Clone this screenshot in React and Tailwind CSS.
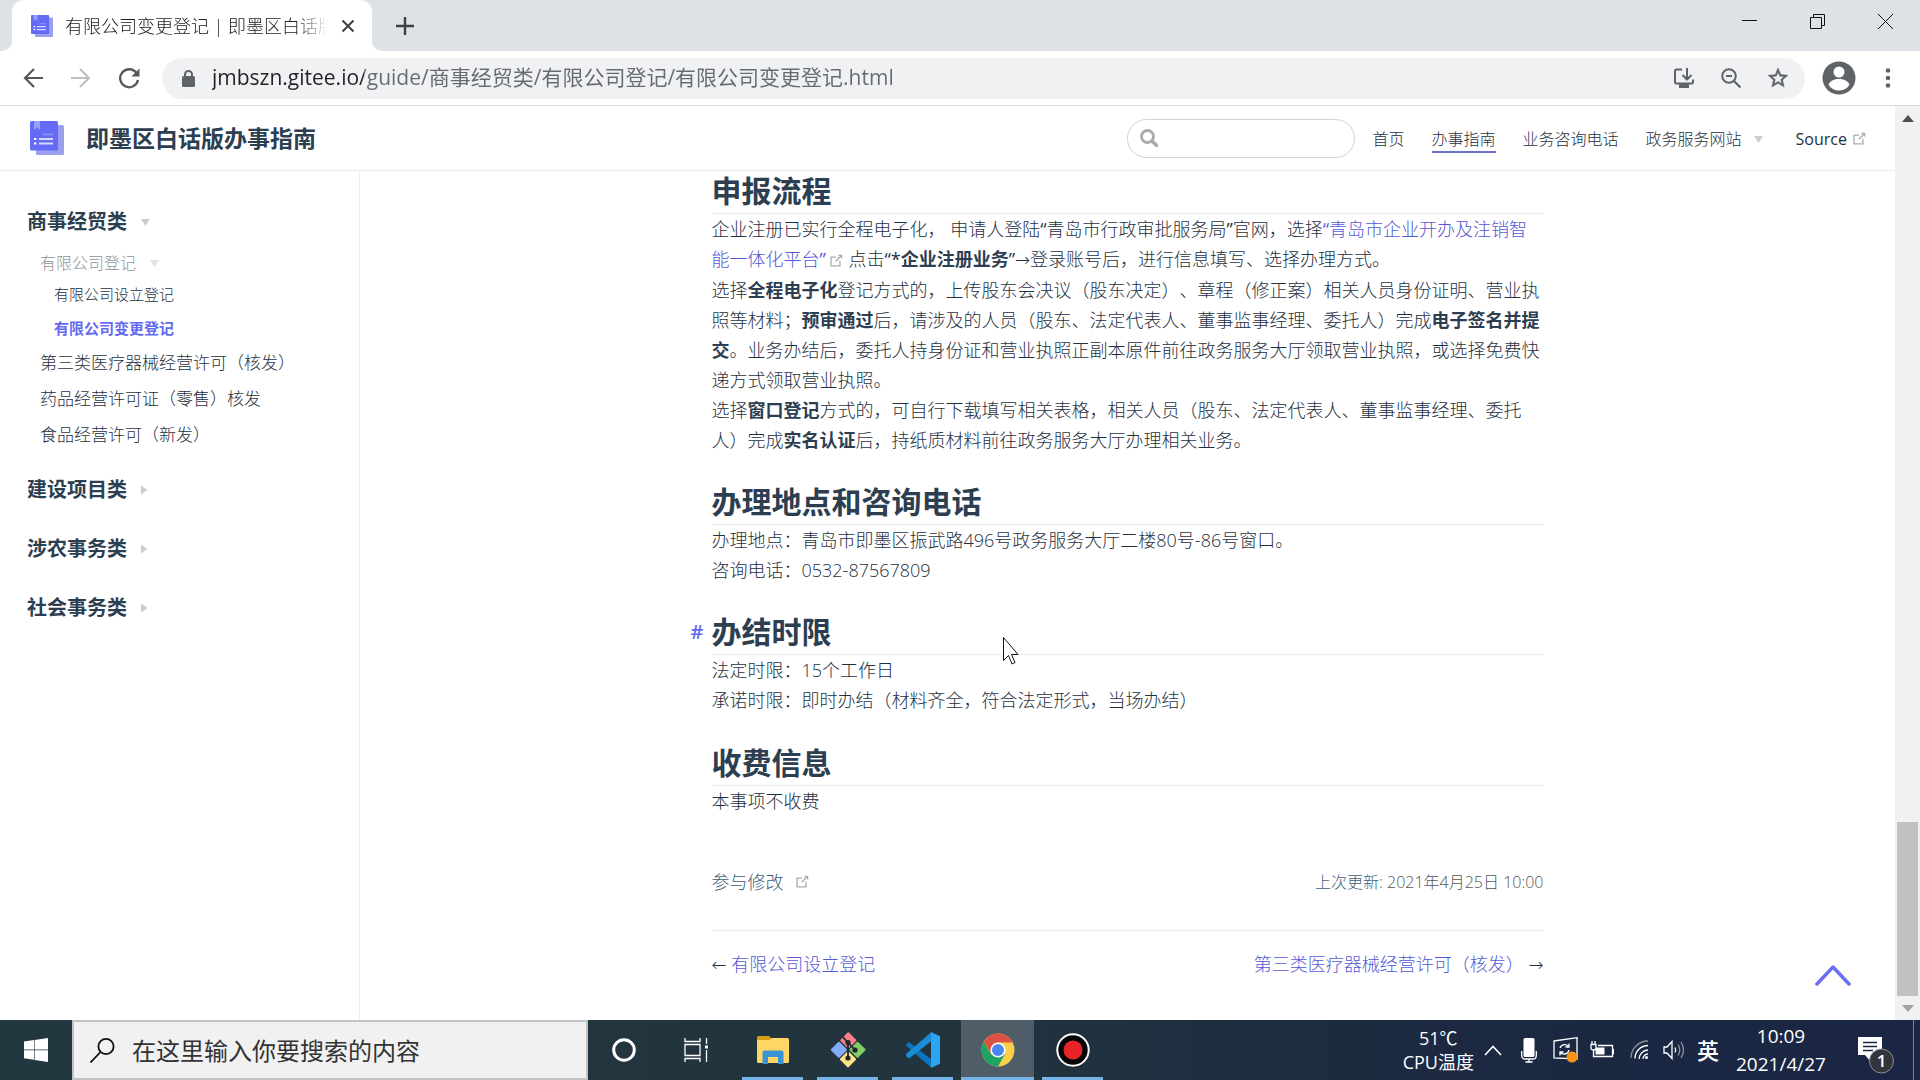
import React from "react";

const sans = "font-['Open_Sans','Noto_Sans_CJK_SC',sans-serif]";

function BookLogo({ className }) {
  return (
    <svg viewBox="0 0 34 34" className={className} aria-hidden="true">
      <rect x="6" y="4" width="28" height="30" rx="1.5" fill="#9aa0ee" />
      <rect x="0" y="0" width="28" height="29.5" rx="1.5" fill="#656bf6" />
      <path d="M4 0h6v9l-3-3-3 3z" fill="#9ba0f8" />
      <path d="M13 13.5h10" stroke="#8f95f9" strokeWidth="1.6" />
      <path d="M9 18h14M9 22.5h14" stroke="#d7d9ff" strokeWidth="1.8" />
      <path d="M4 18h2.4M4 22.5h2.4" stroke="#fff" strokeWidth="2.2" />
    </svg>
  );
}

function Outbound({ className = "" }) {
  return (
    <svg viewBox="0 0 100 100" className={"inline-block h-4 w-4 align-middle " + className} fill="#aaa" aria-hidden="true">
      <path d="M18.8,85.1h56c2.2,0,4-1.8,4-4v-32h-8v28h-48v-48h28v-8h-32c-2.2,0-4,1.8-4,4v56C14.8,83.3,16.6,85.1,18.8,85.1z" />
      <path d="M45.7,48.7l5.6,5.6L81,24.6v10h8V15c0-2.200-1.800-4-4-4H65v8h10.400z" />
    </svg>
  );
}

function Down({ className = "text-[#ccc]" }) {
  return (
    <svg viewBox="0 0 10 8" className={"h-2 w-2.5 " + className} fill="currentColor" aria-hidden="true">
      <path d="M0 1h9L4.500 8z" />
    </svg>
  );
}

function Right() {
  return (
    <svg viewBox="0 0 8 10" className="h-2.5 w-2 text-[#ccc]" fill="currentColor" aria-hidden="true">
      <path d="M0 0.500v9L6.500 5z" />
    </svg>
  );
}

function TabStrip() {
  return (
    <div className="flex h-[51px] items-stretch bg-[#dee1e6] pl-3">
      <div className="relative flex w-[360px] items-center rounded-t-xl bg-white pl-[19px] pr-3">
        <svg viewBox="0 0 10 10" className="absolute -left-2.5 bottom-0 h-2.5 w-2.5" aria-hidden="true">
          <path d="M10 0v10H0A10 10 0 0 0 10 0z" fill="#fff" />
        </svg>
        <svg viewBox="0 0 10 10" className="absolute -right-2.5 bottom-0 h-2.5 w-2.5" aria-hidden="true">
          <path d="M0 0v10h10A10 10 0 0 1 0 0z" fill="#fff" />
        </svg>
        <BookLogo className="h-[22px] w-[22px] shrink-0" />
        <span className="ml-3 flex-1 overflow-hidden whitespace-nowrap text-lg font-light text-[#202124] [mask-image:linear-gradient(to_right,#000_88%,transparent)]">
          有限公司变更登记 | 即墨区白话版办事指南
        </span>
        <button aria-label="关闭标签页" className="ml-2 grid h-6 w-6 place-items-center">
          <svg viewBox="0 0 14 14" className="h-3.5 w-3.5" stroke="#3c4043" strokeWidth="2" aria-hidden="true">
            <path d="M1.500 1.500l11 11M12.500 1.500l-11 11" />
          </svg>
        </button>
      </div>
      <button aria-label="新标签页" className="ml-[21px] grid w-6 place-items-center">
        <svg viewBox="0 0 18 18" className="h-[18px] w-[18px]" stroke="#3c4043" strokeWidth="2.400" aria-hidden="true">
          <path d="M9 0v18M0 9h18" />
        </svg>
      </button>
      <div className="ml-auto flex h-[43px] items-center">
        <button aria-label="最小化" className="grid h-full w-[68px] place-items-center">
          <svg viewBox="0 0 15 15" className="h-[15px] w-[15px]" stroke="#111" aria-hidden="true">
            <path d="M0 6.500h15" />
          </svg>
        </button>
        <button aria-label="还原" className="grid h-full w-[68px] place-items-center">
          <svg viewBox="0 0 15 15" className="h-[15px] w-[15px]" fill="none" stroke="#111" aria-hidden="true">
            <path d="M0.500 3.500h11v11h-11zM3.500 3.500v-3h11v11h-3" />
          </svg>
        </button>
        <button aria-label="关闭" className="grid h-full w-[69px] place-items-center">
          <svg viewBox="0 0 15 15" className="h-[15px] w-[15px]" stroke="#111" aria-hidden="true">
            <path d="M0 0l15 15M15 0L0 15" />
          </svg>
        </button>
      </div>
    </div>
  );
}

function Toolbar() {
  return (
    <div className="flex h-[55px] items-center border-b border-[#d9dbde] bg-white pl-[21px] pr-5">
      <button aria-label="后退" className="grid h-6 w-6 place-items-center">
        <svg viewBox="0 0 20 20" className="h-5 w-5" fill="none" stroke="#55585c" strokeWidth="2.200" aria-hidden="true">
          <path d="M20 10H2M11 1l-9 9 9 9" />
        </svg>
      </button>
      <button aria-label="前进" className="ml-6 grid h-6 w-6 place-items-center">
        <svg viewBox="0 0 20 20" className="h-5 w-5" fill="none" stroke="#bdc1c6" strokeWidth="2.200" aria-hidden="true">
          <path d="M0 10h18M9 1l9 9-9 9" />
        </svg>
      </button>
      <button aria-label="重新加载" className="ml-6 grid h-6 w-6 place-items-center">
        <svg viewBox="0 0 22 22" className="h-[22px] w-[22px]" aria-hidden="true">
          <path d="M18.500 6A9 9 0 1 0 20 13" fill="none" stroke="#55585c" strokeWidth="2.300" />
          <path d="M21.500 1.500v8h-8z" fill="#55585c" />
        </svg>
      </button>
      <div className="ml-[21px] flex h-[41px] min-w-0 flex-1 items-center rounded-full bg-[#f0f1f3] pl-5 pr-[15px]">
        <svg viewBox="0 0 13 17" className="h-[17px] w-[13px] shrink-0" aria-hidden="true">
          <path d="M3 8V4.500a3.500 3.500 0 0 1 7 0V8" fill="none" stroke="#5f6368" strokeWidth="2" />
          <rect y="6" width="13" height="11" rx="1.500" fill="#5f6368" />
        </svg>
        <input
          aria-label="地址栏"
          defaultValue="jmbszn.gitee.io/guide/商事经贸类/有限公司登记/有限公司变更登记.html"
          className="ml-[17px] min-w-0 flex-1 bg-[linear-gradient(to_right,#202124_152px,#666a6f_152px)] bg-clip-text text-[21px] text-transparent outline-none"
        />
        <div className="flex items-center gap-[23px]">
          <button aria-label="安装应用" className="grid h-6 w-6 place-items-center">
            <svg viewBox="0 0 20 20" className="h-5 w-5" fill="none" stroke="#5f6368" strokeWidth="2" aria-hidden="true">
              <path d="M8 1.500H2.500Q1 1.500 1 3v11q0 1.500 1.500 1.500h15Q19 15.500 19 14v-2.500M13 0v11M8.500 7l4.500 4.500L17.500 7" />
              <path d="M5 16h10v4H5z" fill="#5f6368" stroke="none" />
            </svg>
          </button>
          <button aria-label="缩放" className="grid h-6 w-6 place-items-center">
            <svg viewBox="0 0 20 20" className="h-5 w-5" fill="none" stroke="#5f6368" strokeWidth="2" aria-hidden="true">
              <circle cx="8" cy="8" r="6.800" />
              <path d="M13 13l6.500 6.500M5 8h6" strokeWidth="2.200" />
            </svg>
          </button>
          <button aria-label="为此标签页添加书签" className="grid h-6 w-6 place-items-center">
            <svg viewBox="0 0 24 24" className="h-6 w-6" fill="#5f6368" stroke="#5f6368" strokeWidth="0.500" aria-hidden="true">
              <path d="M22 9.240l-7.190-.62L12 2 9.190 8.630 2 9.240l5.460 4.730L5.820 21 12 17.270 18.180 21l-1.630-7.030L22 9.240zM12 15.400l-3.760 2.270 1-4.280-3.320-2.880 4.380-.38L12 6.100l1.710 4.040 4.380.38-3.320 2.880 1 4.280L12 15.400z" />
            </svg>
          </button>
        </div>
      </div>
      <button aria-label="个人资料" className="ml-[17px]">
        <svg viewBox="0 0 34 34" className="h-[34px] w-[34px]" aria-hidden="true">
          <circle cx="17" cy="17" r="16.500" fill="#5f6368" />
          <circle cx="17" cy="11" r="5.500" fill="#fff" />
          <path d="M6.500 23.500c2-4 6-5.500 10.500-5.500s8.500 1.500 10.500 5.500c-2.200 4-6 6-10.500 6s-8.300-2-10.500-6z" fill="#fff" />
        </svg>
      </button>
      <button aria-label="更多" className="ml-5 grid h-8 w-6 place-items-center">
        <svg viewBox="0 0 6 20" className="h-5 w-1.5" fill="#5f6368" aria-hidden="true">
          <circle cx="3" cy="2.500" r="2.300" />
          <circle cx="3" cy="10" r="2.300" />
          <circle cx="3" cy="17.500" r="2.300" />
        </svg>
      </button>
    </div>
  );
}

function SiteHeader() {
  return (
    <header className="flex h-[65px] items-center border-b border-[#eaecef] bg-white pl-[30px] pr-7 text-[#2c3e50]">
      <a href="#home" className="flex items-center">
        <BookLogo className="h-[34px] w-[34px]" />
        <span className="ml-[22px] text-[23px] font-semibold">即墨区白话版办事指南</span>
      </a>
      <label className="ml-auto flex h-[39px] w-[228px] items-center rounded-full border border-[#cfd4db] pl-3 pr-4">
        <svg viewBox="0 0 18 18" className="h-[18px] w-[18px] shrink-0" fill="none" stroke="#aaa" aria-hidden="true">
          <circle cx="7.500" cy="7.500" r="6" strokeWidth="2.800" />
          <path d="M12 12l5 5" strokeWidth="3.400" strokeLinecap="round" />
        </svg>
        <input type="text" aria-label="搜索" className="ml-2 w-full min-w-0 bg-transparent outline-none" />
      </label>
      <nav className="ml-[18px] flex items-center gap-[27px] pt-0.5 text-base font-light leading-6 text-[#1f3141]">
        <a href="#home">首页</a>
        <a href="#guide" className="-mb-0.5 border-b-2 border-[#6d72cf]">办事指南</a>
        <a href="#tel">业务咨询电话</a>
        <button className="flex items-center">
          政务服务网站 <Down className="ml-3 text-[#ccc]" />
        </button>
        <a href="#source" className="ml-[5px] flex items-center font-medium">
          Source <Outbound className="ml-1" />
        </a>
      </nav>
    </header>
  );
}

function Group({ title, open }) {
  return (
    <button className="flex h-[59px] w-full items-center gap-3.5 pl-[27px] text-xl font-bold">
      {title}
      {open ? <Down /> : <Right />}
    </button>
  );
}

function Sidebar() {
  return (
    <aside className="w-[360px] shrink-0 border-r border-[#eaecef] pt-[21px] text-[#2c3e50]">
      <Group title="商事经贸类" open />
      <div className="flex flex-col font-light text-[#1f3141]">
        <button className="flex h-6 items-center gap-3.5 pl-10 text-base text-[#8f9398]">
          有限公司登记
          <Down className="text-[#e2e2e2]" />
        </button>
        <a href="#setup" className="mt-0.5 flex h-[34px] items-center pl-[54px] text-[15px]">有限公司设立登记</a>
        <a href="#change" className="flex h-[34px] items-center pl-[54px] text-[15px] font-semibold text-[#646af0]">有限公司变更登记</a>
        <a href="#medical" className="flex h-9 items-center pl-10 text-[17px]">第三类医疗器械经营许可（核发）</a>
        <a href="#drug" className="flex h-9 items-center pl-10 text-[17px]">药品经营许可证（零售）核发</a>
        <a href="#food" className="flex h-9 items-center pl-10 text-[17px]">食品经营许可（新发）</a>
      </div>
      <div className="mt-[7px]">
        <Group title="建设项目类" />
        <Group title="涉农事务类" />
        <Group title="社会事务类" />
      </div>
    </aside>
  );
}

function H2({ children, className = "mt-[27px]" }) {
  return (
    <h2 className={"border-b border-[#eaecef] pb-0.5 text-[30px] font-bold leading-10 text-[#2c3e50] " + className}>{children}</h2>
  );
}

function B({ children }) {
  return <strong className="font-bold text-[#2c3e50]">{children}</strong>;
}

function Q({ children }) {
  return <span className="font-normal">{children}</span>;
}

function Arrow({ children }) {
  return <span className="font-['DejaVu_Sans',sans-serif]">{children}</span>;
}

const link = "text-[#5558d6]";

function Article() {
  return (
    <div className="mx-auto w-full max-w-[832px] text-lg font-light leading-[30px] text-[#1f3141]">
      <H2 className="">申报流程</H2>
      <p>
        企业注册已实行全程电子化，<Q> </Q>申请人登陆<Q>“</Q>青岛市行政审批服务局<Q>”</Q>官网，选择
        <a href="#platform" className={link}><Q>“</Q>青岛市企业开办及注销智能一体化平台<Q>”</Q><Outbound className="ml-0.5" /></a><Q>{" "}</Q>
        点击<Q>“*</Q><B>企业注册业务</B><Q>”</Q><Arrow>→</Arrow>登录账号后，进行信息填写、选择办理方式。
        <br />
        选择<B>全程电子化</B>登记方式的，上传股东会决议（股东决定）、章程（修正案）相关人员身份证明、营业执照等材料；<B>预审通过</B>后，请涉及的人员（股东、法定代表人、董事监事经理、委托人）完成<B>电子签名并提交</B>。业务办结后，委托人持身份证和营业执照正副本原件前往政务服务大厅领取营业执照，或选择免费快递方式领取营业执照。
        <br />
        选择<B>窗口登记</B>方式的，可自行下载填写相关表格，相关人员（股东、法定代表人、董事监事经理、委托人）完成<B>实名认证</B>后，持纸质材料前往政务服务大厅办理相关业务。
      </p>
      <H2>办理地点和咨询电话</H2>
      <p>
        办理地点：青岛市即墨区振武路496号政务服务大厅二楼80号-86号窗口。
        <br />
        咨询电话：0532-87567809
      </p>
      <H2 className="relative mt-[27px]">
        <a href="#limit" aria-label="办结时限" className="absolute right-full mr-2 text-xl font-semibold leading-10 text-[#6468ee]">#</a>
        办结时限
      </H2>
      <p>
        法定时限：15个工作日
        <br />
        承诺时限：即时办结（材料齐全，符合法定形式，当场办结）
      </p>
      <H2 className="mt-7">收费信息</H2>
      <p>本事项不收费</p>
      <footer className="mt-[51px] flex items-center justify-between">
        <a href="#edit" className="flex items-center text-[#3d5d7d]">
          参与修改 <Outbound className="ml-2.5" />
        </a>
        <p className="text-base text-[#3d5d7d]">
          上次更新: <time className="text-[#555]">2021年4月25日 10:00</time>
        </p>
      </footer>
      <nav className="mt-[33px] flex items-center justify-between border-t border-[#eaecef] pt-[18px]">
        <span>
          <Arrow>←</Arrow> <a href="#setup" className={link}>有限公司设立登记</a>
        </span>
        <span>
          <a href="#medical" className={link}>第三类医疗器械经营许可（核发）</a> <Arrow>→</Arrow>
        </span>
      </nav>
    </div>
  );
}

function Scrollbar() {
  return (
    <div className="flex w-[25px] shrink-0 flex-col items-center bg-[#f1f1f1]" aria-hidden="true">
      <svg viewBox="0 0 12 7" className="mt-[9px] h-[7px] w-3" fill="#505050"><path d="M6 0l6 7H0z" /></svg>
      <div className="grow-[700]" />
      <div className="w-[21px] grow-[174] bg-[#c1c1c1]" />
      <svg viewBox="0 0 12 7" className="mb-2 mt-[9px] h-[7px] w-3" fill="#a0a0a0"><path d="M6 7l6-7H0z" /></svg>
    </div>
  );
}

function TaskButton({ label, active, children }) {
  return (
    <button aria-label={label} className="flex h-full w-[75px] flex-col items-center">
      <span className={active ? "grid w-[73px] flex-1 place-items-center bg-[#4e5d67] pt-[3px]" : "grid w-[73px] flex-1 place-items-center pt-[3px]"}>
        {children}
      </span>
      <span className={active ? "h-[3px] w-[73px] bg-[#76b3e6]" : "h-[3px] w-[61px] bg-[#76b3e6]"} />
    </button>
  );
}

function Taskbar() {
  return (
    <div className="flex h-[60px] items-stretch bg-[linear-gradient(to_right,#223840,#22343e_50%,#1c2941_75%,#1a2644)] text-white">
      <button aria-label="开始" className="grid w-[72px] place-items-center">
        <svg viewBox="0 0 24 24" className="h-6 w-6" fill="#fff" aria-hidden="true">
          <path d="M0 3.400L10 2v9.500H0zM10.600 1.900L24 0v11.500H10.600zM0 12.200h10v9.500l-10-1.400zM10.600 12.200H24V24l-13.400-1.900z" />
        </svg>
      </button>
      <label className="flex w-[516px] items-center border-2 border-[#c2c3c4] bg-[#f1f1f1] pl-4">
        <svg viewBox="0 0 25 25" className="h-[25px] w-[25px] shrink-0" fill="none" stroke="#111" strokeWidth="1.800" aria-hidden="true">
          <circle cx="16" cy="8.500" r="7.600" />
          <path d="M10.500 14L0.500 24.500" />
        </svg>
        <input aria-label="搜索" placeholder="在这里输入你要搜索的内容" className="ml-[17px] min-w-0 flex-1 bg-transparent pt-0.5 text-2xl outline-none placeholder:text-[#333]" />
      </label>
      <button aria-label="Cortana" className="grid w-[72px] place-items-center">
        <svg viewBox="0 0 24 24" className="h-6 w-6" fill="none" stroke="#fff" strokeWidth="3" aria-hidden="true"><circle cx="12" cy="12" r="10.300" /></svg>
      </button>
      <button aria-label="任务视图" className="mr-[3px] grid w-[72px] place-items-center">
        <svg viewBox="0 0 25 24" className="h-6 w-[25px]" fill="none" stroke="#fff" strokeWidth="1.300" aria-hidden="true">
          <path d="M1 0v3.500h15V0M1 24v-3.500h15V24M1 6.500h15v11H1zM22.500 0v6M22.500 12v12" />
          <path d="M21 7.500h3v3h-3z" fill="#fff" stroke="none" />
        </svg>
      </button>
      <TaskButton label="文件资源管理器">
        <svg viewBox="0 0 32 28" className="h-7 w-8" aria-hidden="true">
          <path d="M0 1.500Q0 0 1.500 0H12l3 3-3 3H0z" fill="#d69d14" />
          <path d="M0 4h12l3-2h15.500Q32 2 32 3.500v22q0 1.500-1.500 1.500h-29Q0 27 0 25.500z" fill="#ffd765" />
          <path d="M5.500 28V16.500q0-2 2-2h17q2 0 2 2V28H21v-7H11v7z" fill="#3b94d4" />
        </svg>
      </TaskButton>
      <TaskButton label="Git">
        <svg viewBox="0 0 36 36" className="h-9 w-9" aria-hidden="true">
          <rect x="12" y="2.200" width="12" height="12" rx="1" transform="rotate(45 18 8.700)" fill="#f78184" />
          <rect x="2.700" y="11.700" width="12" height="12" rx="1" transform="rotate(45 8.700 18)" fill="#82abf8" />
          <rect x="21.300" y="11.700" width="12" height="12" rx="1" transform="rotate(45 27.300 18)" fill="#80cd62" />
          <rect x="12" y="21.300" width="12" height="12" rx="1" transform="rotate(45 18 27.300)" fill="#fbe285" />
          <path d="M13 5l5 6v15M18 10.500l7 7.500" fill="none" stroke="#20262b" strokeWidth="1.800" />
          <g fill="#20262b">
            <circle cx="18" cy="10.500" r="2.600" /><circle cx="25" cy="18" r="2.600" /><circle cx="18" cy="26" r="2.600" />
          </g>
        </svg>
      </TaskButton>
      <TaskButton label="Visual Studio Code">
        <svg viewBox="0 0 36 36" className="h-9 w-9" aria-hidden="true">
          <path d="M1 12.500l3-2.500 22.500 17.500V36L1.500 14z" fill="#0b74bd" />
          <path d="M1 24l3 2.500L26.500 9V0L1 22z" fill="#1b8cd6" />
          <path d="M26 0l9 4.300V31.700L26 36z" fill="#2ba5f0" />
        </svg>
      </TaskButton>
      <TaskButton label="Google Chrome" active>
        <svg viewBox="0 0 34 34" className="h-[34px] w-[34px]" aria-hidden="true">
          <circle cx="17" cy="17" r="16.500" fill="#fbcf4a" />
          <path d="M2.700 8.700A16.500 16.500 0 0 1 31.300 8.700L31.600 9.500H17l-7 11.200z" fill="#dd5144" />
          <path d="M2.700 8.700A16.500 16.500 0 0 0 17 33.500l7-12.400-14 .2z" fill="#1da462" />
          <circle cx="17" cy="17" r="7.600" fill="#fff" />
          <circle cx="17" cy="17" r="6" fill="#4a86f0" />
        </svg>
      </TaskButton>
      <TaskButton label="录屏">
        <svg viewBox="0 0 34 34" className="h-[34px] w-[34px]" aria-hidden="true">
          <circle cx="17" cy="17" r="15.700" fill="#050505" stroke="#fff" strokeWidth="2" />
          <circle cx="17" cy="17" r="9.500" fill="#e8232a" />
        </svg>
      </TaskButton>
      <div className="ml-auto flex items-center">
        <div className="text-center text-lg leading-6">
          <div>51℃</div>
          <div>CPU温度</div>
        </div>
        <button aria-label="显示隐藏的图标" className="ml-2.5">
          <svg viewBox="0 0 18 11" className="h-[11px] w-[18px]" fill="none" stroke="#fff" strokeWidth="1.600" aria-hidden="true"><path d="M1 10l8-8.500L17 10" /></svg>
        </button>
        <svg viewBox="0 0 16 25" className="ml-[19px] h-[25px] w-4" aria-hidden="true">
          <rect x="2.500" width="11" height="19" rx="1.500" fill="#fff" />
          <path d="M0.700 13v4.500q0 3.500 3.500 3.500h7.600q3.500 0 3.500-3.500V13M8 21v3M4.500 24h7" fill="none" stroke="#fff" strokeWidth="1.300" />
        </svg>
        <svg viewBox="0 0 25 26" className="ml-4 h-[26px] w-[25px]" fill="none" stroke="#fff" strokeWidth="1.300" aria-hidden="true">
          <path d="M1 4l23-3.300V22L1 21z" />
          <path d="M7 11a5 5 0 0 1 9-1M16 6.500V10h-3.500M16 13a5 5 0 0 1-9 2M7 18.500V15h3.500" />
          <circle cx="19" cy="20" r="5.500" fill="#f7941d" stroke="none" />
        </svg>
        <svg viewBox="0 0 24 18" className="ml-3 h-[18px] w-6" fill="none" stroke="#fff" strokeWidth="1.300" aria-hidden="true">
          <path d="M1 3.500h5V7q0 2-2.500 2T1 7zM2 0v3.500M5 0v3.500M3.500 9v6.500h19v-11H8M22.500 8.500h1v4h-1" />
          <path d="M5.500 6.500h9v7h-9z" fill="#fff" stroke="none" />
        </svg>
        <svg viewBox="0 0 19 20" className="ml-4 h-5 w-[19px]" fill="none" stroke="#fff" strokeWidth="1.300" aria-hidden="true">
          <path d="M1 18A17 17 0 0 1 18 1" opacity="0.500" />
          <path d="M5 18.500A13 13 0 0 1 18 5.500M9 19a9.500 9.500 0 0 1 9-9M13 19a5 5 0 0 1 5-5" />
          <circle cx="16.500" cy="17.500" r="1.500" fill="#fff" stroke="none" />
        </svg>
        <svg viewBox="0 0 22 20" className="ml-[14px] h-5 w-[22px]" fill="none" stroke="#fff" strokeWidth="1.300" aria-hidden="true">
          <path d="M1 7h3l5-5.500v17L4 13H1z" />
          <path d="M12 7.500q1.500 2.500 0 5" />
          <path d="M15 4.500q3.500 5.500 0 11M18 2q5 8 0 16" opacity="0.500" />
        </svg>
        <button className="ml-3 text-[22px] font-medium">英</button>
        <div className="ml-4 w-[92px] whitespace-nowrap text-center text-[19px] leading-7">
          <div>10:09</div>
          <div>2021/4/27</div>
        </div>
        <button aria-label="通知" className="ml-[31px] mr-[19px] mt-2.5">
          <svg viewBox="0 0 36 40" className="h-10 w-9" aria-hidden="true">
            <path d="M0 2h24v18H14l-2 6-5-6H0z" fill="#fff" />
            <path d="M5 7.500h14M5 11.500h14M5 15.500h10" stroke="#1b2743" strokeWidth="1.300" />
            <circle cx="23.500" cy="26" r="12" fill="#33353b" stroke="#8a8d94" />
            <text x="23.500" y="32" textAnchor="middle" fontSize="17" fontWeight="600" fill="#fff">1</text>
          </svg>
        </button>
        <button aria-label="显示桌面" className="h-[60px] w-[7px] border-l border-[#7b8394]" />
      </div>
    </div>
  );
}

export default function App() {
  return (
    <div className={"flex min-h-screen flex-col bg-white [text-spacing-trim:space-all] " + sans}>
      <TabStrip />
      <Toolbar />
      <div className="flex flex-1">
        <div className="relative flex min-w-0 flex-1 flex-col">
          <SiteHeader />
          <div className="flex flex-1">
            <Sidebar />
            <main className="min-w-0 flex-1">
              <Article />
            </main>
          </div>
          <button aria-label="返回顶部" className="absolute bottom-[34px] right-11">
            <svg viewBox="0 0 36 22" className="h-[22px] w-9" fill="none" stroke="#6c6ff0" strokeWidth="3.500" strokeLinecap="round" strokeLinejoin="round" aria-hidden="true">
              <path d="M2 20L18 3l16 17" />
            </svg>
          </button>
          <svg viewBox="0 0 16 28" className="pointer-events-none absolute left-[1003px] top-[531px] h-7 w-4" fill="#fff" stroke="#111" aria-hidden="true">
            <path d="M0.500 0.500v23l5-5 3.500 8.500 3-1.500-3.500-8H15z" />
          </svg>
        </div>
        <Scrollbar />
      </div>
      <Taskbar />
    </div>
  );
}
